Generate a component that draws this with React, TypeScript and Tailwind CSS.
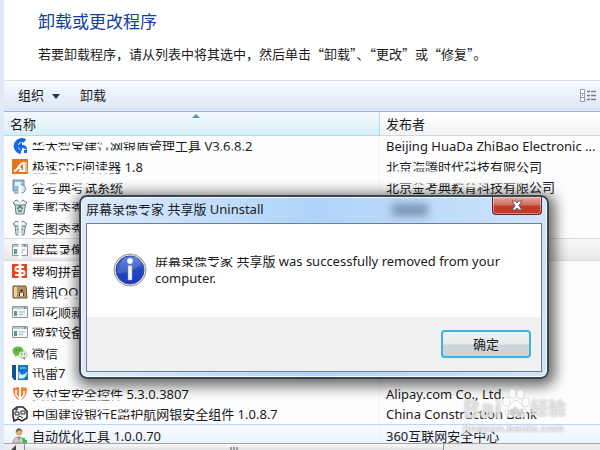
import { useState } from 'react'
import type { ReactNode } from 'react'

interface Program {
  name: string
  publisher?: string
  icon: ReactNode
  // worn strokes over the name, in cell pixels
  wear?: string
  publisherWear?: string
}

const WindowIcon = () => (
  <>
    <path d="M.5 2.500h15v11H.5z" fill="#f4f7f7" stroke="#8b9799" />
    <path d="M1 3h14v2H1z" fill="#b9c9cf" />
    <path d="M2 7h3v5H2z" fill="#5c9b86" />
    <path d="M7 8h6M7 10.500h4" stroke="#a6b3b5" />
    <path d="M12 4h2" stroke="#456b9b" />
  </>
)

const BinIcon = () => (
  <>
    <path d="M3 5l1 10h8l1.500-10z" fill="#c9d5dc" stroke="#71818c" />
    <path d="M1 4l3-3 4 2 3-2 4 3-2 2H4z" fill="#edf3f5" stroke="#6a7b88" />
    <path d="M5.500 10l2.500-3 2.500 3M10 12H6" fill="none" stroke="#2f8a5b" strokeWidth="1.500" />
  </>
)

const programs: Program[] = [
  {
    name: '华大智宝建行网银盾管理工具 V3.6.8.2',
    publisher: 'Beijing HuaDa ZhiBao Electronic ...',
    icon: (
      <>
        <path d="M13 3A6 6 0 1 0 9 14" fill="none" stroke="#1268e8" strokeWidth="4" />
        <path d="M5 8l5-4v3c4 0 5 2 5 5l-4-2h-1v3z" fill="#1268e8" />
        <path d="M12 12h3v3h-3z" fill="#1268e8" />
      </>
    ),
    wear: 'M27 5h125M28 16h143M30 11h10M56 11h12M92 10h16M190 16h50',
  },
  {
    name: '极速PDF阅读器 1.8',
    publisher: '北京海腾时代科技有限公司',
    icon: (
      <>
        <path d="M0 0h16v15H0z" fill="#e77519" />
        <path d="M2 12c5 0 4-8 10-8v8H7c3 0 2-4-1-3" fill="none" stroke="#fff" strokeWidth="2" />
        <path d="M14 3v10" stroke="#fff" />
      </>
    ),
    wear: 'M27 4h86M28 16h84M50 11h22',
    publisherWear: 'M4 4h144M5 17h140M30 11h20M84 10h14',
  },
  {
    name: '金考典考试系统',
    publisher: '北京金考典教育科技有限公司',
    icon: (
      <>
        <path d="M1 1h11v11H1z" fill="#94bddb" stroke="#6a8da8" />
        <path d="M3 3h6v4H3z" fill="#e3f1fa" />
        <circle cx="9.500" cy="10" r="4" fill="#d8e9f4" stroke="#6b9ec3" />
        <path d="M2 14h8" stroke="#59758a" />
      </>
    ),
    wear: 'M16 8v13M27 5h90M30 9h24M70 9h14',
    publisherWear: 'M5 5h148M30 9h20M78 9h24',
  },
  {
    name: '美图秀秀',
    icon: <BinIcon />,
    wear: 'M16 0v5M27 4h60M28 16h60M50 10h10',
  },
  {
    name: '美图秀秀',
    icon: <BinIcon />,
    wear: 'M16 0v21M27 4h60M28 11h14M60 16h30',
  },
  {
    name: '屏幕录像',
    icon: <WindowIcon />,
    wear: 'M16 0v20M28 17h50M44 11h16',
  },
  {
    name: '搜狗拼音',
    icon: (
      <>
        <path d="M0 1h15v14H0z" fill="#e8441d" />
        <path d="M12 4H5c-2 0-2 4 0 4h6c2 0 2 4 0 4H3" fill="none" stroke="#fff" strokeWidth="2" />
      </>
    ),
    wear: 'M16 0v19M27 4h40M28 17h20',
  },
  {
    name: '腾讯QQ',
    icon: (
      <>
        <path d="M1 2h13l1 12H1z" fill="#b79560" stroke="#6d5632" />
        <path d="M2 3h3v10H2z" fill="#e6d2a4" />
        <path d="M7 12c0-9 5-9 5 0z" fill="#2c3947" />
        <path d="M8 9h3v3H8z" fill="#f7efdb" />
        <path d="M7 8h5" stroke="#d59930" />
      </>
    ),
    wear: 'M27 4h50M54 16h24',
  },
  {
    name: '同花顺新',
    icon: <WindowIcon />,
    wear: 'M27 4h60M28 16h22',
  },
  {
    name: '微软设备',
    icon: <WindowIcon />,
    wear: 'M27 4h28M28 16h30',
  },
  {
    name: '微信',
    icon: (
      <>
        <ellipse cx="6" cy="6" rx="5.500" ry="4.500" fill="#67b83e" />
        <ellipse cx="11" cy="10" rx="4.500" ry="3.500" fill="#dbe9d3" stroke="#a5c697" strokeWidth=".5" />
        <path d="M3 9v3l3-2M13 12v3l-3-2" fill="#67b83e" />
        <path d="M4 5h1M7 5h1M9 9h1M12 9h1" stroke="#315d20" />
      </>
    ),
    wear: 'M27 4h26M28 16h12',
  },
  {
    name: '迅雷7',
    icon: (
      <>
        <path d="M0 0h4v15H2L0 12z" fill="#14508c" />
        <path d="M6 0h10v15H6z" fill="#1378cc" />
        <path d="M8 3h6M7 7c2 5 6 3 8 0-1 6-4 7-8 6z" fill="#e6f7ff" stroke="#9bdcfa" />
      </>
    ),
    wear: 'M27 4h24M28 16h10',
  },
  {
    name: '支付宝安全控件 5.3.0.3807',
    publisher: 'Alipay.com Co., Ltd.',
    icon: (
      <>
        <path d="M1 2l6-1v13C3 12 1 8 1 2z" fill="#ef8134" />
        <path d="M9 1l6 1c0 6-2 10-6 12z" fill="#ef8134" />
        <path d="M4 4v5l4 4M12 5v4l-4 5" fill="none" stroke="#fff" strokeWidth="1.500" />
      </>
    ),
    wear: 'M27 5h152M28 16h90',
  },
  {
    name: '中国建设银行E路护航网银安全组件 1.0.8.7',
    publisher: 'China Construction Bank',
    icon: (
      <>
        <path d="M1 4l4-3h6l4 4v7l-5 3-4-2-4 2-1-5z" fill="#f2f2f2" stroke="#252525" strokeWidth="1.500" />
        <path d="M3 6h4v3H3zM9 5h4v3H9zM5 12l3-2 3 2M2 3l3 2" fill="none" stroke="#303030" />
        <circle cx="5" cy="3" r="1" fill="#292975" />
      </>
    ),
    wear: 'M27 4h130M28 17h110M112 10h12',
  },
  {
    name: '自动优化工具 1.0.0.70',
    publisher: '360互联网安全中心',
    icon: (
      <>
        <circle cx="7" cy="4" r="3.500" fill="#d8ad77" />
        <path d="M4 4c0-5 6-5 6 0L8 2z" fill="#6f5e4c" />
        <path d="M1 15c0-8 11-8 12 0z" fill="#c6cdd2" stroke="#89949b" />
        <path d="M6 9l1 5 1-5z" fill="#bb7435" />
        <path d="M10 10h3v2h2v3h-4z" fill="#45b545" />
      </>
    ),
  },
]

function Wear({ d }: { d?: string }) {
  if (!d) return null
  return (
    <svg className="pointer-events-none absolute inset-0 h-full w-full" aria-hidden="true">
      <path d={d} stroke="#fdfdfd" strokeWidth="3" fill="none" />
    </svg>
  )
}

function rowStyle(index: number) {
  if (index === 5) return 'border-y border-[#dcdcdc] bg-linear-to-b from-[#f9f9f9] to-[#e8e8e8]'
  if (index === 14) return 'border-t border-[#b8d6fb] bg-linear-to-b from-[#fafcff] to-[#e9f2fd]'
  return ''
}

function ProgramTable() {
  return (
    <table className="h-[334px] w-full table-fixed border-separate border-spacing-0 text-left leading-4">
      <thead>
        <tr className="h-6">
          <th className="relative w-[376px] border-r border-b border-[#a9def3] bg-linear-to-b from-[#f3fafd] via-[#e8f5fa] via-40% to-[#d8eef6] px-1.5 font-normal">
            名称
            <svg className="absolute top-0.5 left-1/2 h-1 w-2" viewBox="0 0 8 4" aria-hidden="true">
              <path d="M0 4l4-4 4 4z" fill="#5a93b4" />
            </svg>
          </th>
          <th className="border-b border-[#d5d5d5] bg-linear-to-b from-white to-[#f1f2f4] px-1.5 font-normal">发布者</th>
        </tr>
      </thead>
      <tbody>
        {programs.map((program, index) => (
          <tr key={index}>
            <td className={`relative border-r border-r-[#edf3f9] p-0 pl-2 ${rowStyle(index)}`}>
              <div className="flex h-4 items-center gap-1">
                <svg className="size-4 shrink-0" viewBox="0 0 16 16" aria-hidden="true">
                  {program.icon}
                </svg>
                <span className="whitespace-nowrap">{program.name}</span>
              </div>
              <Wear d={program.wear} />
            </td>
            <td className={`relative overflow-hidden p-0 pl-1.5 whitespace-nowrap ${rowStyle(index)}`}>
              {program.publisher}
              <Wear d={program.publisherWear} />
            </td>
          </tr>
        ))}
      </tbody>
    </table>
  )
}

function UninstallDialog({ onClose }: { onClose: () => void }) {
  return (
    <section
      role="dialog"
      aria-label="屏幕录像专家 共享版 Uninstall"
      className="absolute top-[195px] right-[51px] left-[75px] rounded-lg border-2 border-[#3b444f] bg-linear-to-r from-[#dcebfc] via-[#afd3f8] to-[#cfe4fb] px-[5px] pb-[5px] shadow-[2px_3px_14px_4px_rgba(0,0,0,0.6)] inset-ring inset-ring-white/80"
    >
      <header className="flex h-[26px] items-center justify-between">
        <h2 className="relative whitespace-nowrap">
          屏幕录像专家 共享版 Uninstall
          <svg className="absolute inset-0 h-full w-full" aria-hidden="true">
            <path d="M30 4h34M40 10h24" stroke="#cfe3fa" strokeWidth="2" fill="none" />
          </svg>
        </h2>
        <span className="ml-auto h-3 w-9 bg-[#4a6480]/60 blur-xs" />
        <button
          type="button"
          aria-label="Close"
          onClick={onClose}
          className="ml-16 flex h-[18px] w-[50px] items-center justify-center self-start rounded-b border border-t-0 border-[#5b2a2a] bg-linear-to-b from-[#e5a79e] via-[#d0705f] via-45% to-[#c03a27] to-55% inset-ring inset-ring-white/40"
        >
          <svg className="h-[11px] w-3" viewBox="0 0 12 11" aria-hidden="true">
            <path d="M1 1h3.500L6 3l1.500-2H11L8 5.500 11 10H7.500L6 8l-1.500 2H1l3-4.500z" fill="#fff" stroke="#5c5560" />
          </svg>
        </button>
      </header>
      <div className="border border-[#717e8c] bg-white">
        <div className="flex h-[93px] items-start gap-2 px-[26px] pt-[29px]">
          <svg className="size-[34px] shrink-0" viewBox="0 0 34 34" aria-hidden="true">
            <defs>
              <linearGradient id="info" x2="0" y2="1">
                <stop stopColor="#4a78dc" />
                <stop offset=".5" stopColor="#2348bd" />
                <stop offset="1" stopColor="#1739c8" />
              </linearGradient>
            </defs>
            <circle cx="17" cy="17" r="16" fill="#e6e6e6" stroke="#929292" />
            <circle cx="17" cy="17" r="14" fill="url(#info)" stroke="#3a4d94" />
            <path d="M4 20C11 21 24 17 29 10 26 1 6 0 4 20z" fill="#fff" opacity=".15" />
            <circle cx="17" cy="8" r="2.800" fill="#fff" />
            <path d="M15 12.500h4V27h-4z" fill="#f4f4f4" stroke="#9ba2b8" strokeWidth=".5" />
          </svg>
          <p className="relative leading-[17px]">
            屏幕录像专家 共享版 was successfully removed from your computer.
            <svg className="pointer-events-none absolute inset-0 h-full w-full" aria-hidden="true">
              <path d="M0 3h94M0 15h74M38 9h24" stroke="#fff" strokeWidth="2" />
            </svg>
          </p>
        </div>
        <footer className="flex h-[54px] items-center justify-end bg-[#f0f0f0] px-2.5">
          <button
            type="button"
            onClick={onClose}
            className="h-7 w-[90px] rounded-sm border-2 border-[#3cb4dc] bg-linear-to-b from-[#f0f3f3] via-[#e4e9ea] via-50% to-[#cdd4d7] to-55% leading-4"
          >
            确定
          </button>
        </footer>
      </div>
    </section>
  )
}

function Watermark() {
  return (
    <div className="pointer-events-none absolute right-[34px] bottom-4 flex flex-col font-bold text-white/60 [text-shadow:0_0_2px_#aaa]">
      <div className="flex items-end">
        <span className="text-[25px] leading-7">Bai</span>
        <svg className="h-9 w-7" viewBox="0 0 32 36" aria-hidden="true">
          <g fill="#fff" fillOpacity=".8" stroke="#c4c8cc" strokeWidth=".7">
            <ellipse cx="5" cy="15" rx="4" ry="5" />
            <ellipse cx="12" cy="6" rx="4" ry="5" />
            <ellipse cx="21" cy="7" rx="4" ry="5" />
            <ellipse cx="27" cy="16" rx="4" ry="5" />
            <path d="M16 14c5 0 6 6 10 9s3 11-4 10c-4-1-8-1-12 0-7 1-8-7-4-10s5-9 10-9z" />
          </g>
          <text x="9" y="30" fontSize="12" fill="#ced1d4">
            du
          </text>
        </svg>
        <span className="text-[18px] leading-7">经验</span>
      </div>
      <span className="text-[11px] leading-3">jingyan.baidu.com</span>
    </div>
  )
}

export default function App() {
  const [open, setOpen] = useState(true)

  return (
    <div className="relative flex h-screen flex-col overflow-hidden border-l-4 border-[#dfe9f8] bg-white font-['Noto_Sans','Noto_Sans_CJK_SC',sans-serif] text-[13px] text-[#1a1a1a]">
      <header className="h-20 shrink-0 pt-2.5 pl-[34px]">
        <h1 className="text-[17px] leading-6 text-[#0f419f]">卸载或更改程序</h1>
        <p className="mt-2 font-['Noto_Sans_CJK_SC',sans-serif] text-[13px] leading-6 whitespace-nowrap">
          若要卸载程序，请从列表中将其选中，然后单击“卸载”、“更改”或“修复”。
        </p>
      </header>

      <nav className="flex h-8 shrink-0 items-center gap-5 border-t border-b border-t-[#d5dfeb] border-b-[#a0b2cc] bg-linear-to-b from-[#f7fbff] from-0% via-[#e8f0fa] via-50% to-[#dae5f3] pr-1 pl-3.5">
        <button type="button" className="flex items-center gap-2">
          组织
          <svg className="h-[5px] w-2" viewBox="0 0 8 5" aria-hidden="true">
            <path d="M0 0h8L4 5z" fill="#1e395b" />
          </svg>
        </button>
        <button type="button">卸载</button>
        <button type="button" aria-label="View" className="ml-auto">
          <svg className="h-3.5 w-4" viewBox="0 0 16 14" aria-hidden="true">
            <path d="M.5.5h4v4h-4zM.5 4.500h4v4h-4zM.5 8.500h4v4h-4z" fill="#fff" stroke="#8c9bad" />
            <path d="M2 6.500h1" stroke="#d55" />
            <path d="M7 2.500h3M11 2.500h5M7 6.500h3M11 6.500h5M7 10.500h3M11 10.500h5" stroke="#6f7f93" strokeWidth="1.500" />
          </svg>
        </button>
      </nav>

      <main className="min-h-0 flex-1 overflow-hidden bg-[#fdfdfd]">
        <ProgramTable />
      </main>

      <div className="flex h-[7px] shrink-0 border-t border-[#a5a5a5] bg-[#ececec]">
        <div className="flex w-5 justify-center">
          <svg className="h-1.5 w-2" viewBox="0 0 8 6" aria-hidden="true">
            <path d="M1 6l5-5v5z" fill="#444" />
          </svg>
        </div>
        <div className="flex w-[420px] items-start justify-center border-r border-l border-[#8e8e8e] bg-linear-to-b from-[#fafafa] to-[#e2e2e2] pt-[3px]">
          <svg className="h-1 w-2" viewBox="0 0 8 4" aria-hidden="true">
            <path d="M1 0v4M4 0v4M7 0v4" stroke="#555" />
          </svg>
        </div>
      </div>

      {open && <UninstallDialog onClose={() => setOpen(false)} />}
      <Watermark />
    </div>
  )
}
